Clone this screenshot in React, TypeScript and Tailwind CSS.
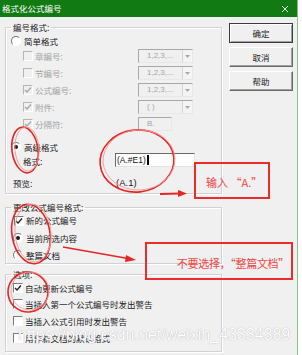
import type {ReactNode} from 'react'

const cjk = "font-['Microsoft_YaHei','Noto_Sans_CJK_SC',sans-serif]"

const Check = ({checked, disabled}: {checked?: boolean; disabled?: boolean}) => (
  <span
    className={`flex h-[10px] w-[10px] shrink-0 items-center justify-center border border-t-[#7a7a7a] border-l-[#7a7a7a] border-r-white border-b-white ${
      disabled ? 'bg-[#f0f0f0] border-t-[#b5b5b5] border-l-[#b5b5b5]' : 'bg-white'
    }`}
  >
    {checked && (
      <svg width="8" height="8" viewBox="0 0 8 8">
        <path
          d="M1 4 L3 6 L7 1.5"
          fill="none"
          stroke={disabled ? '#a8a8a8' : '#222'}
          strokeWidth="1.4"
        />
      </svg>
    )}
  </span>
)

const Radio = ({on}: {on?: boolean}) => (
  <span className="flex h-[10px] w-[10px] shrink-0 items-center justify-center rounded-full border border-t-[#7a7a7a] border-l-[#7a7a7a] border-r-white border-b-white bg-white">
    {on && <span className="h-[4px] w-[4px] rounded-full bg-[#1a1a1a]" />}
  </span>
)

const Combo = ({value}: {value: string}) => (
  <div className="flex h-[14px] w-[55px] items-stretch border border-t-[#a8a8a8] border-l-[#a8a8a8] border-r-[#e8e8e8] border-b-[#e8e8e8] bg-[#f0f0f0]">
    <span className="flex-1 pl-[8px] text-[8px] leading-[12px] text-[#a5a5a5] font-['Liberation_Sans',sans-serif]">
      {value}
    </span>
    <span className="flex w-[10px] items-center justify-center border-l border-[#d4d4d4] bg-[#f4f4f4]">
      <svg width="5" height="3" viewBox="0 0 5 3">
        <path d="M0 0 H5 L2.5 3 Z" fill="#a8a8a8" />
      </svg>
    </span>
  </div>
)

const Row = ({label, children, checked}: {label: string; children: ReactNode; checked?: boolean}) => (
  <div className="mt-[3px] flex h-[14px] items-center pl-[17px] first:mt-[1px]">
    <Check checked={checked} disabled />
    <span className="ml-[2px] w-[103px] text-[#a3a3a3]">{label}</span>
    {children}
  </div>
)

const Group = ({title, className, children}: {title: string; className: string; children: ReactNode}) => (
  <fieldset className={`border border-[#d2d2d2] shadow-[inset_1px_1px_0_#fff,1px_1px_0_#fff] ${className}`}>
    <legend className="ml-[5px] px-[2px] leading-[14px] text-[#1a1a1a]">{title}</legend>
    {children}
  </fieldset>
)

const Button = ({children, main}: {children: ReactNode; main?: boolean}) => (
  <div
    className={`flex h-[20px] w-[64px] items-center justify-center bg-[#f0f0f0] text-[#1a1a1a] ${
      main
        ? 'border border-[#3c3c3c] shadow-[inset_1px_1px_0_#fff,inset_-1px_-1px_0_#a0a0a0]'
        : 'border border-t-white border-l-white border-r-[#6a6a6a] border-b-[#6a6a6a] shadow-[inset_-1px_-1px_0_#a0a0a0]'
    }`}
  >
    {children}
  </div>
)

const Notes = () => (
  <>
    <svg className="pointer-events-none absolute inset-0" width="302" height="355" viewBox="0 0 302 355">
      <g fill="none">
        <ellipse cx="25" cy="150" rx="13" ry="23" stroke="#e32626" strokeWidth="1.6" transform="rotate(-8 25 150)" />
        <ellipse cx="27" cy="149" rx="12" ry="22" stroke="#f29a9a" strokeWidth="0.9" transform="rotate(-4 27 149)" />
        <ellipse cx="137" cy="161" rx="37" ry="31" stroke="#e32626" strokeWidth="1.6" transform="rotate(-6 137 161)" />
        <ellipse cx="139" cy="160" rx="36" ry="30" stroke="#f29a9a" strokeWidth="0.9" transform="rotate(-3 139 160)" />
        <ellipse cx="31" cy="234" rx="19" ry="30" stroke="#e32626" strokeWidth="1.6" transform="rotate(-10 31 234)" />
        <ellipse cx="33" cy="233" rx="18" ry="29" stroke="#f29a9a" strokeWidth="0.9" transform="rotate(-5 33 233)" />
        <ellipse cx="28" cy="292" rx="20" ry="20" stroke="#e32626" strokeWidth="1.6" transform="rotate(-8 28 292)" />
        <ellipse cx="30" cy="291" rx="19" ry="19" stroke="#f29a9a" strokeWidth="0.9" />
        <path d="M160 194 L180 193.5" stroke="#e32626" strokeWidth="2" />
        <path d="M63 247 L128 258.5" stroke="#e32626" strokeWidth="1.6" />
      </g>
      <path d="M178 190 L187 193.5 L178 197 Z" fill="#e32626" />
      <path d="M126 255 L136 260 L125 262 Z" fill="#e32626" />
    </svg>
    <div className="absolute left-[194px] top-[162px] flex h-[37px] w-[76px] items-center border-2 border-[#ec2c2c] pl-[10px] pt-[4px] text-[11px] text-[#f04444]">
      输入 “A.”
    </div>
    <div className="absolute left-[145px] top-[242px] flex h-[38px] w-[148px] items-end justify-end border-2 border-[#ec2c2c] pb-[7px] pr-[2px] text-[11px] tracking-[-0.3px] text-[#f04444]">
      不要选择，“整篇文档”
    </div>
    <div className="pointer-events-none absolute left-[18px] top-[325px] text-[16px] leading-[20px] text-white [text-shadow:0_0_1px_#9a9a9a] font-['Liberation_Sans',sans-serif]">
      https://blog.csdn.net/weixin_43334389
    </div>
  </>
)

export default function App() {
  return (
    <div className={`relative h-[355px] w-[302px] overflow-hidden bg-white text-[8.5px] ${cjk}`}>
      <div className="flex h-[355px] w-[298px] flex-col border-r border-[#86c486] bg-[#f0f0f0]">
        <div className="flex h-[17px] items-center justify-between bg-[#127a12] pl-[2px] pr-[8px] text-white">
          <span>格式化公式编号</span>
          <svg width="8" height="8" viewBox="0 0 8 8">
            <path d="M1 1 L7 7 M7 1 L1 7" stroke="#e8f5e8" strokeWidth="1" />
          </svg>
        </div>
        <div className="flex">
          <div className="ml-[5px] flex w-[217px] flex-col">
            <Group title="编号格式:" className="mt-[3px] h-[174px]">
              <div className="flex h-[14px] items-center pl-[5px]">
                <Radio />
                <span className="ml-[3px] text-[#1a1a1a]">简单格式</span>
              </div>
              <div className="flex flex-col">
                <Row label="章编号:">
                  <Combo value="1,2,3,..." />
                </Row>
                <Row label="节编号:">
                  <Combo value="1,2,3,..." />
                </Row>
                <Row label="公式编号:" checked>
                  <Combo value="1,2,3,..." />
                </Row>
                <Row label="附件:" checked>
                  <Combo value="( )" />
                </Row>
                <Row label="分隔符:" checked>
                  <div className="h-[14px] w-[34px] border border-t-[#a8a8a8] border-l-[#a8a8a8] border-r-[#e8e8e8] border-b-[#e8e8e8] bg-[#f0f0f0] pl-[8px] text-[8px] leading-[12px] text-[#a5a5a5] font-['Liberation_Sans',sans-serif]">
                    B.
                  </div>
                </Row>
              </div>
              <div className="mt-[10px] flex h-[12px] items-center pl-[5px]">
                <Radio on />
                <span className="ml-[3px] text-[#1a1a1a]">高级格式</span>
              </div>
              <div className="flex h-[14px] items-center pl-[17px]">
                <span className="w-[92px] pt-[3px] text-[#1a1a1a]">格式:</span>
                <div className="flex h-[14px] w-[80px] items-center border border-t-[#6a6a6a] border-l-[#6a6a6a] border-r-[#e4e4e4] border-b-[#e4e4e4] bg-white pl-[1px] text-[8.5px] text-[#111] font-['Liberation_Sans',sans-serif]">
                  (A.#E1)
                  <span className="ml-[1px] h-[10px] w-[2px] bg-black" />
                </div>
              </div>
              <div className="mt-[9px] flex h-[14px] items-center pl-[7px] text-[#1a1a1a]">
                <span className="w-[103px]">预览:</span>
                <span className="text-[9.5px] font-['Liberation_Sans',sans-serif]">(A.1)</span>
              </div>
            </Group>

            <Group title="更改公式编号格式:" className="mt-[6px] h-[64px]">
              <div className="flex h-[13px] items-center pl-[8px]">
                <Check checked />
                <span className="ml-[2px] text-[#1a1a1a]">新的公式编号</span>
              </div>
              <div className="mt-[4px] flex h-[14px] items-center pl-[7px]">
                <Radio on />
                <span className="ml-[3px] text-[#1a1a1a]">当前所选内容</span>
              </div>
              <div className="mt-[3px] flex h-[14px] items-center pl-[7px]">
                <Radio />
                <span className="ml-[3px] text-[#1a1a1a]">整篇文档</span>
              </div>
            </Group>

            <Group title="选项:" className="mt-[3px] h-[85px]">
              <div className="flex h-[14px] items-center pl-[7px]">
                <Check checked />
                <span className="ml-[2px] text-[#1a1a1a]">自动更新公式编号</span>
              </div>
              <div className="mt-[2px] flex h-[14px] items-center pl-[7px]">
                <Check />
                <span className="ml-[2px] text-[#1a1a1a]">当插入第一个公式编号时发出警告</span>
              </div>
              <div className="mt-[3px] flex h-[14px] items-center pl-[7px]">
                <Check />
                <span className="ml-[2px] text-[#1a1a1a]">当插入公式引用时发出警告</span>
              </div>
              <div className="mt-[3px] flex h-[14px] items-center pl-[7px]">
                <Check />
                <span className="ml-[2px] text-[#1a1a1a]">用作新文档的默认格式</span>
              </div>
            </Group>
          </div>

          <div className="ml-[7px] mt-[6px] flex flex-col gap-[4px]">
            <Button main>确定</Button>
            <Button>取消</Button>
            <Button>帮助</Button>
          </div>
        </div>
      </div>
      <Notes />
    </div>
  )
}
